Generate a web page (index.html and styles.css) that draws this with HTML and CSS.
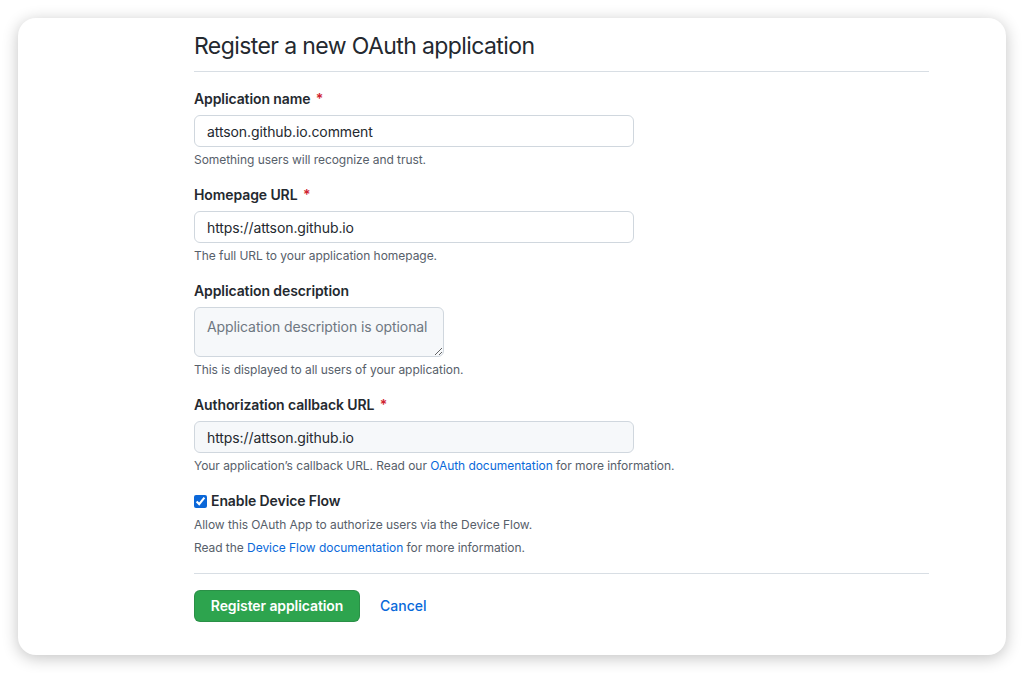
FILE: index.html
```html
<!DOCTYPE html>
<html lang="en">
<head>
<meta charset="utf-8">
<title>Register a new OAuth application</title>
<link rel="stylesheet" href="styles.css">
</head>
<body>
<div class="page">
  <div class="card">
    <form class="form">
      <h1 class="title">Register a new OAuth application</h1>

      <div class="group">
        <label class="label">Application name <span class="req">*</span></label>
        <input class="input" type="text" value="attson.github.io.comment">
        <p class="note">Something users will recognize and trust.</p>
      </div>

      <div class="group">
        <label class="label">Homepage URL <span class="req">*</span></label>
        <input class="input" type="text" value="https://attson.github.io">
        <p class="note">The full URL to your application homepage.</p>
      </div>

      <div class="group">
        <label class="label">Application description</label>
        <textarea class="textarea" placeholder="Application description is optional"></textarea>
        <p class="note">This is displayed to all users of your application.</p>
      </div>

      <div class="group">
        <label class="label">Authorization callback URL <span class="req">*</span></label>
        <input class="input input-muted" type="text" value="https://attson.github.io">
        <p class="note">Your application’s callback URL. Read our <a class="link" href="#">OAuth documentation</a> for more information.</p>
      </div>

      <div class="check-group">
        <label class="check-label"><input class="checkbox" type="checkbox" checked> Enable Device Flow</label>
        <p class="check-note">Allow this OAuth App to authorize users via the Device Flow.</p>
        <p class="check-note second">Read the <a class="link" href="#">Device Flow documentation</a> for more information.</p>
      </div>

      <div class="actions">
        <button class="btn-primary" type="button">Register application</button>
        <a class="cancel" href="#">Cancel</a>
      </div>
    </form>
  </div>
</div>
</body>
</html>
```

FILE: styles.css
```css
* { box-sizing: border-box; }

html, body {
  margin: 0;
  padding: 0;
  background: #ffffff;
}

body {
  font-family: Inter, "Noto Sans", "Liberation Sans", sans-serif;
  color: #24292f;
  -webkit-font-smoothing: antialiased;
}

.page {
  padding: 18px;
}

.card {
  width: 988px;
  height: 637px;
  background: #ffffff;
  border-radius: 18px;
  box-shadow: 0 3px 16px rgba(0, 0, 0, 0.24);
  padding: 13px 77px 0 176px;
}

.form {
  width: 735px;
  display: flex;
  flex-direction: column;
}

.title {
  margin: 0;
  font-size: 23px;
  line-height: 30px;
  font-weight: 400;
  letter-spacing: -0.6px;
  color: #24292f;
  padding-bottom: 10px;
  border-bottom: 1px solid #d8dee4;
  margin-bottom: 17px;
}

.group {
  display: flex;
  flex-direction: column;
  align-items: flex-start;
  margin-bottom: 17px;
}

.label {
  font-size: 14px;
  line-height: 20px;
  font-weight: 600;
  letter-spacing: -0.1px;
  margin-bottom: 6px;
}

.req {
  color: #cf222e;
  margin-left: 2px;
}

.input {
  width: 440px;
  height: 32px;
  padding: 5px 12px;
  font-family: inherit;
  font-size: 14px;
  letter-spacing: -0.1px;
  color: #24292f;
  background: #ffffff;
  border: 1px solid #d0d7de;
  border-radius: 6px;
  outline: none;
}

.input-muted {
  background: #f6f8fa;
}

.textarea {
  width: 250px;
  height: 50px;
  padding: 10px 12px 6px;
  font-family: inherit;
  font-size: 14px;
  letter-spacing: -0.1px;
  color: #24292f;
  background: #f6f8fa;
  border: 1px solid #d0d7de;
  border-radius: 6px;
  outline: none;
  resize: vertical;
}

.textarea::placeholder {
  color: #6e7781;
}

.note {
  margin: 4px 0 0 0;
  font-size: 12px;
  line-height: 17px;
  color: #57606a;
  letter-spacing: -0.05px;
}

.link {
  color: #0969da;
  text-decoration: none;
}

.check-group {
  display: flex;
  flex-direction: column;
  padding-bottom: 16px;
  border-bottom: 1px solid #d8dee4;
}

.check-label {
  display: flex;
  align-items: center;
  font-size: 14px;
  line-height: 20px;
  font-weight: 600;
  letter-spacing: -0.1px;
  margin-bottom: 5px;
}

.checkbox {
  width: 13px;
  height: 13px;
  margin: 0 4px 0 0;
  accent-color: #0b67d8;
}

.check-note {
  margin: 0;
  font-size: 12px;
  line-height: 18px;
  color: #57606a;
  letter-spacing: -0.05px;
}

.check-note.second {
  margin-top: 5px;
}

.actions {
  display: flex;
  align-items: center;
  margin-top: 16px;
}

.btn-primary {
  width: 166px;
  height: 32px;
  font-family: inherit;
  font-size: 14px;
  font-weight: 600;
  letter-spacing: -0.1px;
  line-height: 20px;
  white-space: nowrap;
  color: #ffffff;
  background: #2da44e;
  border: 1px solid rgba(27, 31, 36, 0.15);
  border-radius: 6px;
  padding: 0 8px;
}

.cancel {
  margin-left: 20px;
  font-size: 14px;
  line-height: 20px;
  font-weight: 500;
  color: #0969da;
  text-decoration: none;
}
```
